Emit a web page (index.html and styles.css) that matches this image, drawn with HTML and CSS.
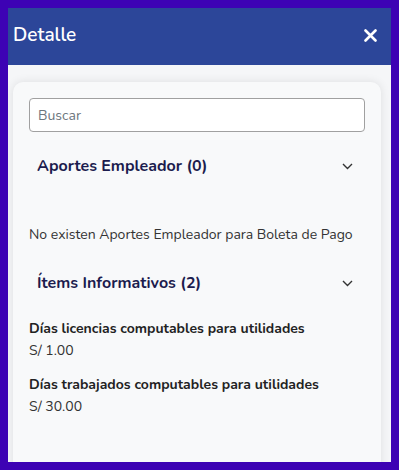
FILE: index.html
```html
<!DOCTYPE html>
<html lang="es">
<head>
    <meta charset="UTF-8">
    <meta name="viewport" content="width=device-width, initial-scale=1.0">
    <title>Detalle</title>
    <link rel="stylesheet" href="styles.css">
</head>
<body>
    <div class="modal">
        <div class="modal-header">
            <h1>Detalle</h1>
            <button class="close-btn" type="button" aria-label="Cerrar">
                <svg width="13" height="13" viewBox="0 0 13 13">
                    <path d="M1.5 1.5 L11.5 11.5 M11.5 1.5 L1.5 11.5" stroke="#fff" stroke-width="2.6" stroke-linecap="round"/>
                </svg>
            </button>
        </div>

        <div class="modal-body">
            <div class="card">
                <input class="search" type="text" placeholder="Buscar">

                <div class="section">
                    <div class="section-header">
                        <span>Aportes Empleador (0)</span>
                        <svg class="chevron" width="11" height="7" viewBox="0 0 11 7">
                            <path d="M1 1 L5.5 5.5 L10 1" fill="none" stroke="#333" stroke-width="1.4"/>
                        </svg>
                    </div>
                    <p class="empty">No existen Aportes Empleador para Boleta de Pago</p>
                </div>

                <div class="section">
                    <div class="section-header">
                        <span>Ítems Informativos (2)</span>
                        <svg class="chevron" width="11" height="7" viewBox="0 0 11 7">
                            <path d="M1 1 L5.5 5.5 L10 1" fill="none" stroke="#333" stroke-width="1.4"/>
                        </svg>
                    </div>
                    <div class="item">
                        <div class="item-label">Días licencias computables para utilidades</div>
                        <div class="item-value">S/ 1.00</div>
                    </div>
                    <div class="item">
                        <div class="item-label">Días trabajados computables para utilidades</div>
                        <div class="item-value">S/ 30.00</div>
                    </div>
                </div>
            </div>
        </div>
    </div>
</body>
</html>
```

FILE: styles.css
```css
* {
    margin: 0;
    padding: 0;
    box-sizing: border-box;
}

body {
    font-family: 'Nunito', 'Lato', 'Open Sans', sans-serif;
    background: #3d02b4;
    height: 470px;
    padding: 8px;
    overflow: hidden;
    color: #333;
}

.modal {
    height: 454px;
    display: flex;
    flex-direction: column;
    background: #f5f6f8;
    overflow: hidden;
}

.modal-header {
    height: 57px;
    flex-shrink: 0;
    background: #2c4699;
    display: flex;
    align-items: center;
    justify-content: space-between;
    padding: 0 14px 3px 5px;
}

.modal-header h1 {
    color: #fff;
    font-size: 19px;
    font-weight: 600;
}

.close-btn {
    background: none;
    border: none;
    display: flex;
    cursor: pointer;
}

.modal-body {
    flex: 1;
    padding: 17px 10px 0 5px;
    overflow: hidden;
}

.card {
    background: #f8f9fa;
    border-radius: 10px;
    box-shadow: 0 0 10px rgba(0, 0, 0, 0.1);
    padding: 16px 16px 40px;
    min-height: 420px;
}

.search {
    width: 100%;
    height: 34px;
    border: 1px solid #a0a0a0;
    border-radius: 4px;
    background: #fff;
    padding: 0 8px;
    font-family: inherit;
    font-size: 14px;
    color: #333;
}

.search::placeholder {
    color: #6c757d;
}

.section-header {
    display: flex;
    align-items: center;
    justify-content: space-between;
    height: 40px;
    padding: 0 12px 0 8px;
    font-size: 16px;
    font-weight: 700;
    color: #1c1c4e;
}

.section:first-of-type .section-header {
    margin-top: 14px;
}

.empty {
    font-size: 14px;
    margin: 39px 0 18px;
    line-height: 20px;
}

.item {
    margin-top: 15px;
    line-height: 22px;
}

.item + .item {
    margin-top: 12px;
}

.item-label {
    font-size: 14px;
    font-weight: 700;
    color: #222;
}

.item-value {
    font-size: 14px;
    color: #333;
}
```
